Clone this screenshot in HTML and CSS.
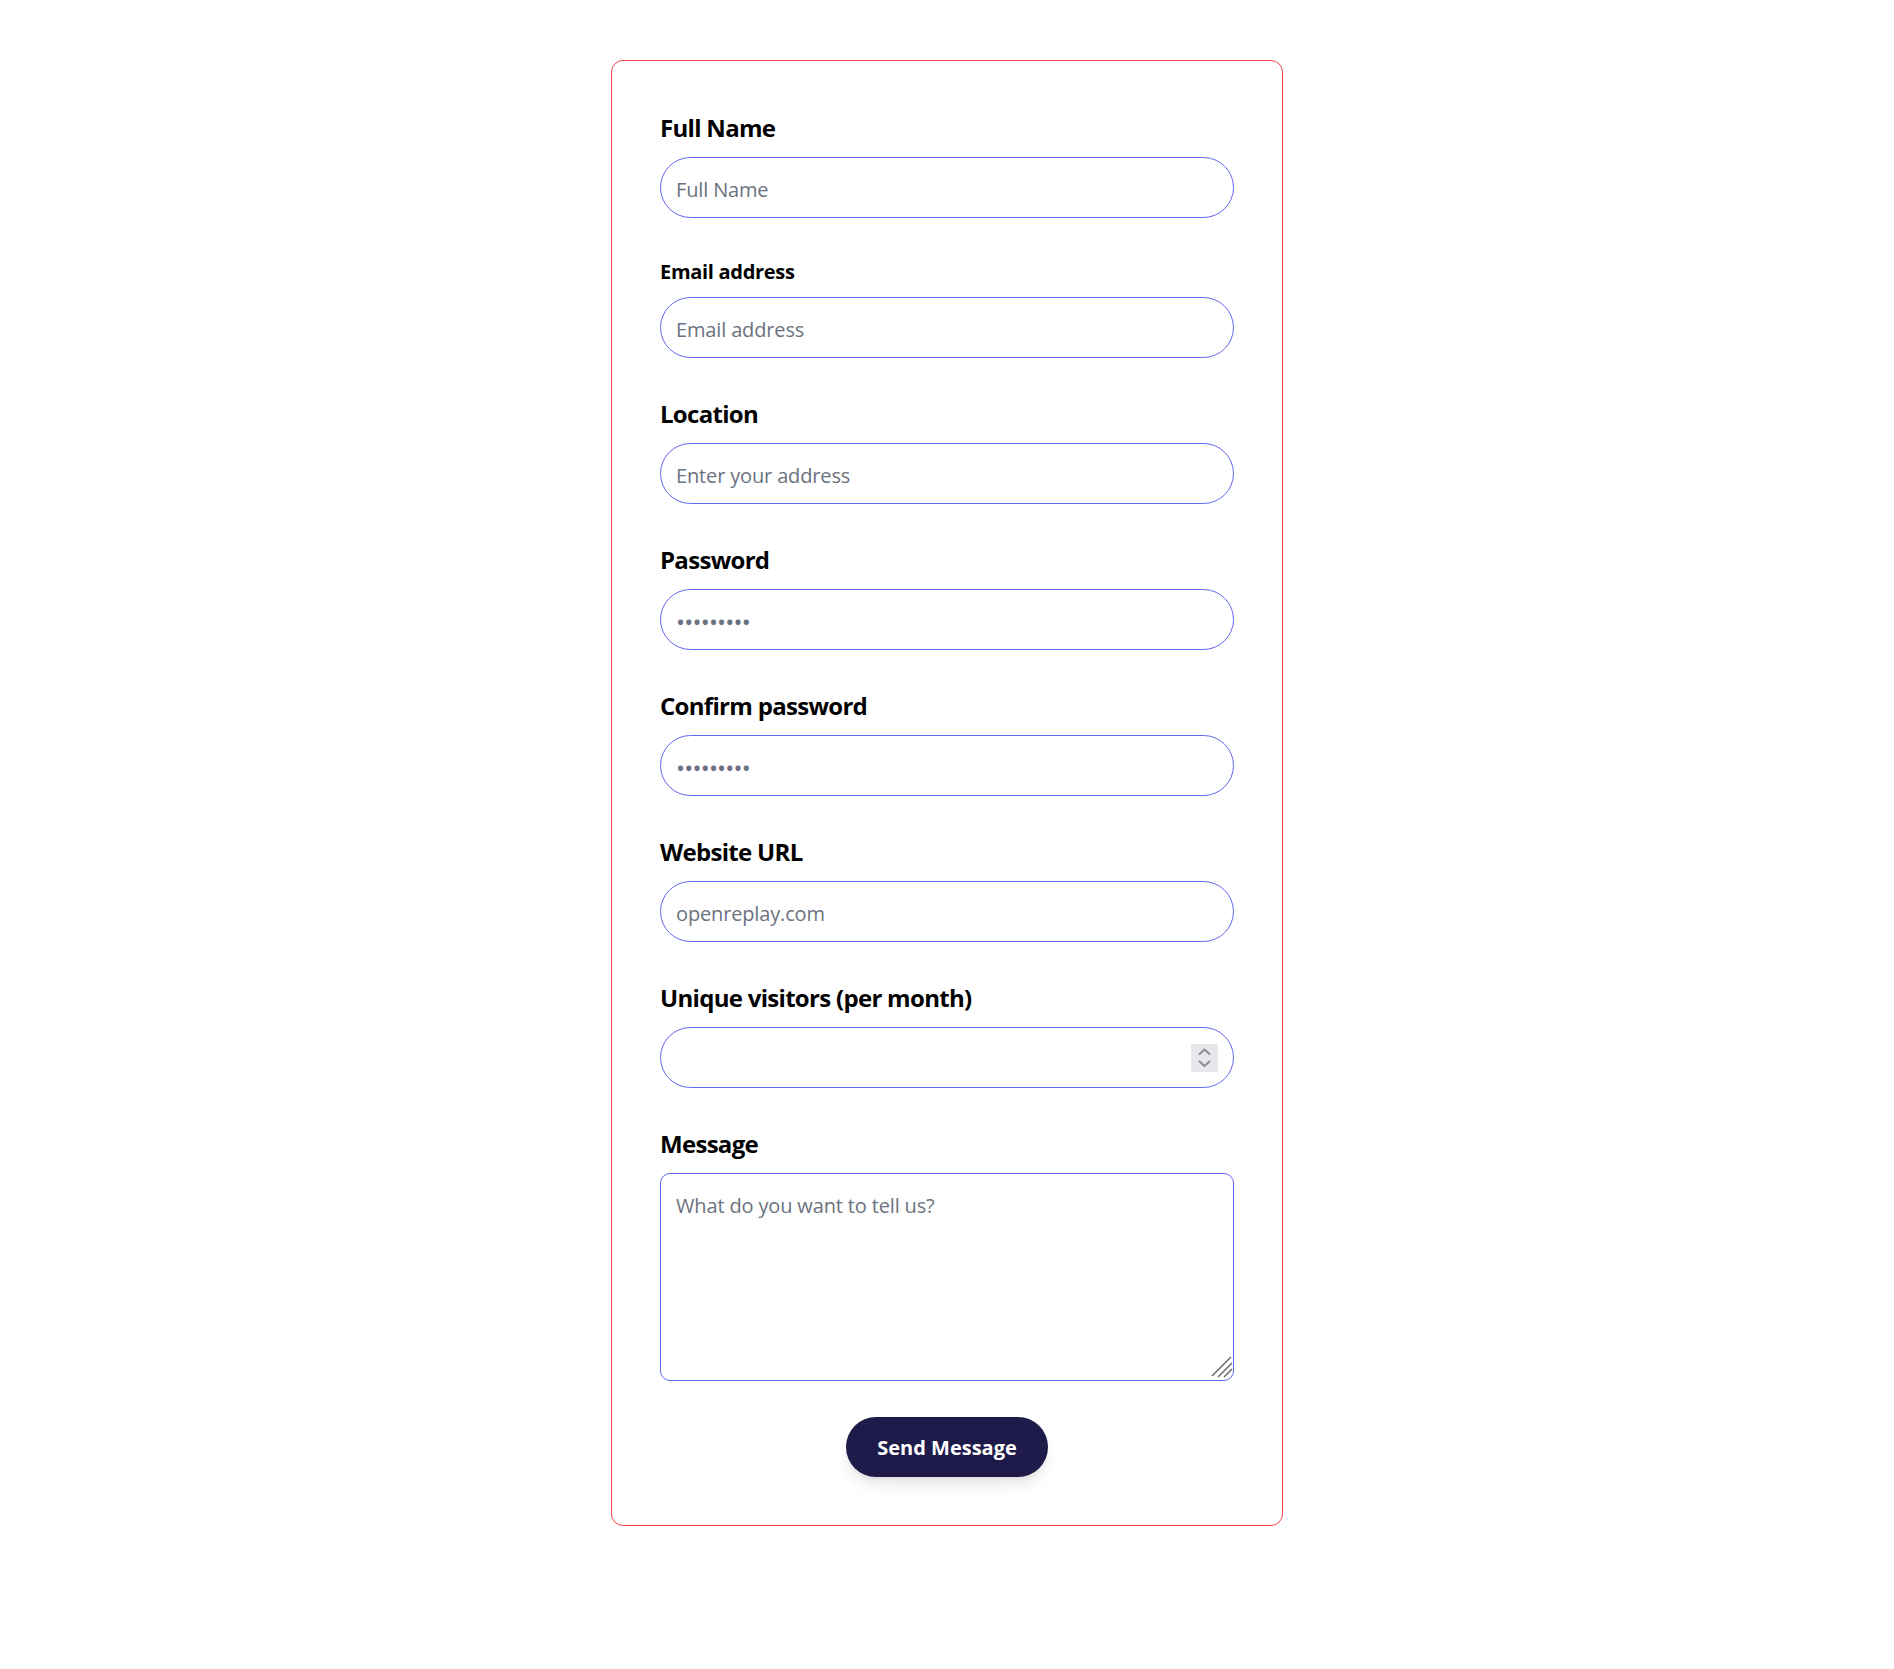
FILE: index.html
```html
<!DOCTYPE html>
<html lang="en">
<head>
<meta charset="utf-8">
<title>Contact form</title>
<link rel="stylesheet" href="styles.css">
</head>
<body>
<main class="page">
  <form class="card">
    <div class="field">
      <label class="label" for="name">Full Name</label>
      <input class="input" id="name" type="text" placeholder="Full Name">
    </div>
    <div class="field">
      <label class="label label-sm" for="email">Email address</label>
      <input class="input" id="email" type="email" placeholder="Email address">
    </div>
    <div class="field">
      <label class="label" for="location">Location</label>
      <input class="input" id="location" type="text" placeholder="Enter your address">
    </div>
    <div class="field">
      <label class="label" for="password">Password</label>
      <input class="input input-password" id="password" type="password" placeholder="•••••••••">
    </div>
    <div class="field">
      <label class="label" for="confirm">Confirm password</label>
      <input class="input input-password" id="confirm" type="password" placeholder="•••••••••">
    </div>
    <div class="field">
      <label class="label" for="website">Website URL</label>
      <input class="input" id="website" type="url" placeholder="openreplay.com">
    </div>
    <div class="field">
      <label class="label" for="visitors">Unique visitors (per month)</label>
      <div class="input number-box">
        <input class="number-input" id="visitors" type="number">
        <span class="spin" aria-hidden="true">
          <svg width="27" height="28" viewBox="0 0 27 28" fill="none" stroke="#8e8e93" stroke-width="2" stroke-linecap="round" stroke-linejoin="round">
            <path d="M8.5 10 L13.5 5.5 L18.5 10"/>
            <path d="M8.5 17.5 L13.5 22 L18.5 17.5"/>
          </svg>
        </span>
      </div>
    </div>
    <div class="field field-message">
      <label class="label" for="message">Message</label>
      <div class="textarea-wrap">
        <textarea class="input textarea" id="message" placeholder="What do you want to tell us?"></textarea>
        <svg class="grip" width="24" height="24" viewBox="0 0 24 24" fill="none" stroke="#6e6e6e" stroke-width="1.6" aria-hidden="true">
          <path d="M3 22 L22 3"/>
          <path d="M9 23 L23 9"/>
          <path d="M15 23 L23 15"/>
        </svg>
      </div>
    </div>
    <div class="actions">
      <button class="button" type="submit">Send Message</button>
    </div>
  </form>
</main>
</body>
</html>
```

FILE: styles.css
```css
html, body {
  margin: 0;
  padding: 0;
  background: #ffffff;
}

body {
  font-family: "Open Sans", "Noto Sans", sans-serif;
  color: #000000;
}

.page {
  display: flex;
  justify-content: center;
  padding: 60px 0;
}

.card {
  width: 672px;
  box-sizing: border-box;
  border: 1px solid #ef4444;
  border-radius: 12px;
  padding: 51px 48px 48px;
  background: #ffffff;
}

.field {
  margin-bottom: 40px;
}

.field-message {
  margin-bottom: 36px;
}

.label {
  display: block;
  font-weight: 700;
  font-size: 24px;
  line-height: 32px;
  letter-spacing: -0.7px;
  margin-bottom: 13px;
  color: #000000;
}

.label-sm {
  font-size: 20px;
  line-height: 28px;
  letter-spacing: -0.3px;
  margin-bottom: 11px;
}

.input {
  display: block;
  width: 100%;
  box-sizing: border-box;
  height: 61px;
  margin: 0;
  padding: 3px 16px 0 15px;
  border: 1px solid #6366f1;
  border-radius: 9999px;
  background: #ffffff;
  font-family: "Open Sans", "Noto Sans", sans-serif;
  font-size: 20px;
  line-height: 28px;
  letter-spacing: -0.15px;
  color: #111827;
  outline: none;
}

.input::placeholder,
.number-input::placeholder {
  color: #6b7280;
  opacity: 1;
}

.input-password {
  padding-top: 7px;
}

.input-password::placeholder {
  font-size: 24px;
  letter-spacing: -0.8px;
}

.number-box {
  display: flex;
  align-items: center;
  padding: 0 15px 0 16px;
}

.number-input {
  flex: 1;
  min-width: 0;
  height: 100%;
  margin: 0;
  padding: 0;
  border: 0;
  background: transparent;
  font-family: inherit;
  font-size: 20px;
  color: #111827;
  outline: none;
  -moz-appearance: textfield;
}

.number-input::-webkit-inner-spin-button,
.number-input::-webkit-outer-spin-button {
  -webkit-appearance: none;
  margin: 0;
}

.spin {
  display: flex;
  width: 27px;
  height: 28px;
  background: #e6e6eb;
}

.textarea-wrap {
  position: relative;
}

.textarea {
  height: 208px;
  padding: 18px 16px 16px 15px;
  border-radius: 10px;
  resize: none;
}

.grip {
  position: absolute;
  right: 1px;
  bottom: 3px;
  pointer-events: none;
}

.actions {
  display: flex;
  justify-content: center;
}

.button {
  height: 60px;
  padding: 0 31px;
  border: 0;
  border-radius: 9999px;
  background: #1e1b4b;
  color: #ffffff;
  font-family: "Open Sans", "Noto Sans", sans-serif;
  font-weight: 700;
  font-size: 20px;
  letter-spacing: 0;
  cursor: pointer;
  box-shadow: 0 10px 15px -3px rgba(0, 0, 0, 0.1), 0 4px 6px -4px rgba(0, 0, 0, 0.1);
}
```
